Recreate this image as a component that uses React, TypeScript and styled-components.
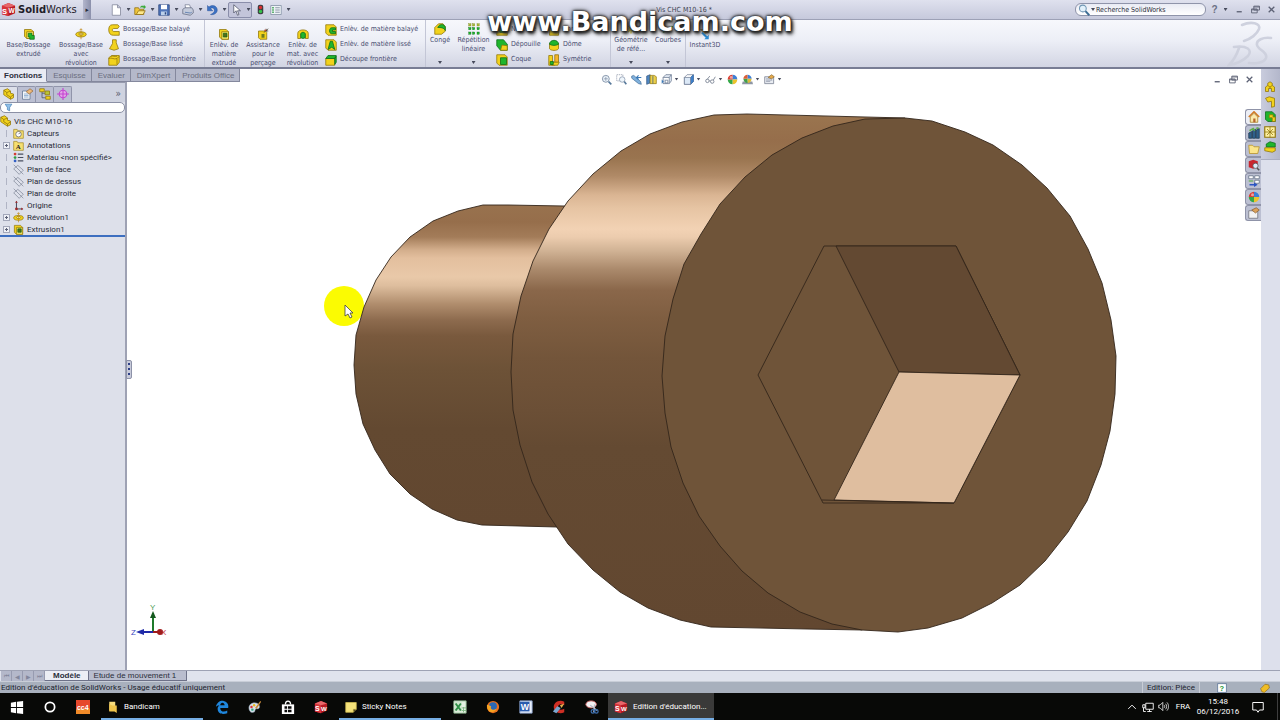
import React from 'react';
import styled, { createGlobalStyle, css } from 'styled-components';

const GlobalStyle = createGlobalStyle`
  * { box-sizing: border-box; }
  html, body { margin: 0; padding: 0; }
  body { font-family: Roboto, "Open Sans", "Noto Sans", sans-serif; font-size: 8px; color: #2b2e3a; background: #ffffff; }
  button, input { font: inherit; color: inherit; }
  ul { list-style: none; margin: 0; padding: 0; }
`;

const uiFont = '"DejaVu Sans Condensed", "DejaVu Sans", sans-serif';
const tabFont = '"Liberation Sans", Arial, sans-serif';

/* ---------- icons ---------- */

const Y = '#f2d21c';
const YD = '#8f7408';
const G = '#1fb52c';
const GD = '#0b6a18';

const icons: Record<string, React.ReactNode> = {
  solidworks: (
    <>
      <path d="M1 4 8 1l7 3v8l-7 3-7-2z" fill="#b81a22" />
      <path d="M1 4 8 6v9l-7-2z" fill="#d8333a" />
      <path d="M1 4 8 1l7 3-7 2z" fill="#e8666a" />
      <text x="1" y="13" fontSize="8" fontWeight="700" fill="#fff" fontFamily="Liberation Sans">S</text>
      <text x="8" y="12" fontSize="7" fontWeight="700" fill="#fff" fontFamily="Liberation Sans">W</text>
    </>
  ),
  newDoc: <path d="M3 1h7l4 4v10H3zM10 1v4h4" fill="#fff" stroke="#7d8296" />,
  open: (
    <>
      <path d="M1 5h5l1 2h6v7H1z" fill="#f0c63a" stroke="#8d6b10" />
      <path d="M3 14 6 9h9l-3 5z" fill="#fde88a" stroke="#8d6b10" />
      <path d="M8 5c1-3 3-3 5-2V1l3 3-3 3V5c-2-1-3-1-5 0z" fill="#3bab3b" />
    </>
  ),
  save: (
    <>
      <path d="M1 1h14v14H1z" fill="#4f74b8" stroke="#29447c" />
      <path d="M4 1h8v6H4z" fill="#fff" />
      <path d="M4 10h8v5H4z" fill="#bcd0ea" />
      <path d="M9 11h2v3H9z" fill="#29447c" />
    </>
  ),
  print: (
    <>
      <path d="M4 1h6l2 5H5z" fill="#fff" stroke="#7a8097" />
      <path d="M1 7l3-2h9l2 3v4l-4 3-10-2z" fill="#c4cbdb" stroke="#666c82" />
      <path d="M4 11l7 1 2-1" fill="none" stroke="#4d70a8" />
    </>
  ),
  undo: <path d="M2 2v7h7L6 6c3-2 6 0 5 4-1 2-3 3-5 4 5 1 9-2 9-6 0-5-6-8-11-4z" fill="#3c72c4" stroke="#1f4a92" strokeWidth=".6" />,
  cursor: <path d="M5 1v11l3-3 2 6 2-1-2-5h4z" fill="#fff" stroke="#4c5064" />,
  traffic: (
    <>
      <rect x="4" y="1" width="8" height="14" rx="3" fill="#3c3c40" />
      <circle cx="8" cy="5" r="2.5" fill="#d93030" />
      <circle cx="8" cy="11" r="2.5" fill="#35c24a" />
    </>
  ),
  options: (
    <>
      <path d="M1 2h14v12H1z" fill="#eef3f6" stroke="#7f8ca0" />
      <path d="M3 5h2M3 8h2M3 11h2" stroke="#35a04a" strokeWidth="2" />
      <path d="M7 5h6M7 8h6M7 11h6" stroke="#6d7a90" />
    </>
  ),
  search: (
    <>
      <circle cx="6.5" cy="6" r="4.5" fill="#e2f1fb" stroke="#7097b4" strokeWidth="1.4" />
      <path d="M10 9.500l5 5.500" stroke="#3d6d94" strokeWidth="2.600" />
    </>
  ),
  extrude: (
    <>
      <path d="M2 2h9l3 3v9H5l-3-3z" fill={Y} stroke={YD} />
      <path d="M5 5h9v9H5z" fill="#fbe96c" stroke={YD} />
      <path d="M7 7h5v3h3v5H9v-3H7z" fill={G} stroke={GD} />
    </>
  ),
  revolve: (
    <>
      <ellipse cx="8" cy="8.500" rx="7" ry="3.500" fill={Y} stroke={YD} />
      <ellipse cx="8" cy="8" rx="3" ry="1.500" fill="#fff6b0" stroke={YD} />
      <path d="M8 1v14M6 3l2-2 2 2" stroke="#c08a1a" fill="none" />
    </>
  ),
  sweep: <path d="M13 1H6C2 1 1 4 1 8s2 7 6 7h8v-5H8c-3 0-3-4 0-4h5l2-3z" fill={Y} stroke={YD} />,
  loft: <path d="M6 1h5v4l3 8-6 2-6-2 4-7z" fill={Y} stroke={YD} />,
  boundary: (
    <>
      <path d="M1 5l4-3h10v9l-3 4H1z" fill={Y} stroke={YD} />
      <path d="M1 6c4-2 7 2 11 0l3-3M12 6v8M4 3c3-1 5 1 8 0" fill="none" stroke={YD} />
    </>
  ),
  cutExtrude: (
    <>
      <path d="M2 2h9l3 3v10H5l-3-3z" fill={Y} stroke={YD} />
      <path d="M5 5h9v10H5z" fill="#fbe96c" stroke={YD} />
      <path d="M7 7h5v5H7z" fill="#5a6a18" stroke={GD} />
    </>
  ),
  hole: (
    <>
      <path d="M2 4h9l2 2v9H4l-2-2z" fill={Y} stroke={YD} />
      <path d="M6 8h4v5H6z" fill="#6f7b20" />
      <path d="M9 6l6-5M12 1l1 4M10 3l5 1" stroke="#4a4030" />
      <circle cx="11" cy="3" r="1" fill="#d83a2a" />
    </>
  ),
  cutRevolve: (
    <>
      <path d="M1 7c0-6 14-6 14 0v7h-4V8H5v6H1z" fill={Y} stroke={YD} />
      <path d="M5 8c0-3 6-3 6 0v5l-3 1-3-1z" fill={G} stroke={GD} />
    </>
  ),
  cutSweep: (
    <>
      <path d="M1 1h11l3 3v11H4l-3-3z" fill={Y} stroke={YD} />
      <path d="M14 5H9C5 5 5 13 9 13h5v-3h-4V8h4z" fill={G} stroke={GD} />
    </>
  ),
  cutLoft: (
    <>
      <path d="M1 1h11l3 3v11H4l-3-3z" fill={Y} stroke={YD} />
      <path d="M7 3h3l3 11-4-3-5 3z" fill={G} stroke={GD} />
    </>
  ),
  cutBoundary: (
    <>
      <path d="M1 6h12v9H1z" fill={Y} stroke={YD} />
      <path d="M1 6l3-4h11l-2 4zM13 6l2-3v8l-2 3z" fill={G} stroke={GD} />
    </>
  ),
  fillet: (
    <>
      <path d="M1 6l5-5h6l3 4v6l-5 4H1z" fill={Y} stroke={YD} />
      <path d="M5 6C7 1 13 1 15 5v5c-2-4-6-4-10-4z" fill={G} stroke={GD} />
    </>
  ),
  pattern: (
    <g>
      {[1, 6, 12].map((x) => [1, 6, 12].map((y) => (
        <rect key={`${x}-${y}`} x={x} y={y} width="3" height="3" fill={y === 1 ? '#a8b83a' : G} stroke={y === 1 ? '#7d8a1c' : GD} strokeWidth=".5" />
      )))}
    </g>
  ),
  rib: (
    <>
      <path d="M1 3h4v8h10v4H1z" fill={Y} stroke={YD} />
      <path d="M5 4l8 7H5z" fill={G} stroke={GD} />
    </>
  ),
  draft: (
    <>
      <path d="M1 1h9l5 6v8H6L1 9z" fill={G} stroke={GD} />
      <path d="M8 8l7 1v6H6z" fill={Y} stroke={YD} />
    </>
  ),
  shell: (
    <>
      <path d="M1 1h11l3 3v11H4l-3-3z" fill={Y} stroke={YD} />
      <path d="M6 5h8v9H6z" fill={G} stroke={GD} />
    </>
  ),
  wrap: (
    <>
      <path d="M2 4h12v11H2z" fill={Y} stroke={YD} />
      <path d="M2 5c2-5 10-5 12 0l-6 3z" fill={G} stroke={GD} />
    </>
  ),
  dome: (
    <>
      <path d="M2 6v7c2 3 10 3 12 0V6z" fill={Y} stroke={YD} />
      <path d="M2 7C2 0 14 0 14 7c-3 2-9 2-12 0z" fill={G} stroke={GD} />
    </>
  ),
  mirror: (
    <>
      <path d="M1 2h5v9h3v4H1z" fill={Y} stroke={YD} />
      <path d="M9 1h5v10H9z" fill="#f7b42a" stroke={YD} />
      <path d="M6 11h9l-2 4H5z" fill={Y} stroke={YD} />
      <path d="M3 10h4v4H3z" fill={G} stroke={GD} />
    </>
  ),
  refGeo: <path d="M4 4l8 8M12 4l-8 8M8 2v12M2 8h12" stroke="#d6c21a" strokeWidth="1.500" />,
  curves: <path d="M2 13C4 3 9 14 14 4" stroke="#2f9a35" strokeWidth="2" fill="none" />,
  instant: (
    <>
      <path d="M2 2h7l5 3-6 2z" fill="#f5b32e" stroke="#8f7408" />
      <path d="M5 5l6 6 2-2v6H7l2-2-6-6z" fill="#2b8fd6" />
    </>
  ),
  zoomFit: (
    <>
      <circle cx="7" cy="7" r="5" fill="#eef5fb" stroke="#7d8ea4" strokeWidth="1.300" />
      <path d="M4 7h6M7 4v6" stroke="#7d8ea4" />
      <path d="M11 11l4 4" stroke="#56789a" strokeWidth="2.400" />
    </>
  ),
  zoomArea: (
    <>
      <path d="M1 1h9v9H1z" fill="none" stroke="#8a93a6" strokeDasharray="2 1" />
      <circle cx="9" cy="8" r="4" fill="#eef5fb" stroke="#7d8ea4" />
      <path d="M12 11l3 4" stroke="#56789a" strokeWidth="2.400" />
    </>
  ),
  prevView: (
    <>
      <path d="M1 3l3-1 10 9 1 4-4-1L1 6z" fill="#7fb0dc" stroke="#4a7299" />
      <path d="M9 5h6M11 2L8 5l3 3" stroke="#3a79b6" strokeWidth="1.600" fill="none" />
    </>
  ),
  section: (
    <>
      <path d="M1 3l5-2v12l-5 2z" fill="#4f86c4" stroke="#33547d" />
      <path d="M6 2h6l3 2v10H6z" fill="#ecd04b" stroke={YD} />
      <path d="M10 3v11" stroke="#33547d" />
    </>
  ),
  viewOri: (
    <>
      <path d="M3 5l4-4h8v9l-3 4H3z" fill="#e5ecf5" stroke="#5b6a85" />
      <path d="M3 5h9v9M12 5l3-4M6 9h4v4H6z" fill="#fff" stroke="#5b6a85" />
      <path d="M1 8l3 3-3 3z" fill="#3a79b6" />
    </>
  ),
  display: (
    <>
      <path d="M2 5l4-4h9v10l-4 4H2z" fill="#fff" stroke="#66738c" />
      <path d="M11 5l4-4v10l-4 4z" fill="#3f83cf" stroke="#2d5e99" />
      <path d="M2 5h9v10H2z" fill="#dce9f7" stroke="#66738c" />
    </>
  ),
  glasses: <path d="M1 10a2.500 2.500 0 1 0 5 0 2.500 2.500 0 1 0-5 0M8 11a2.500 2.500 0 1 0 5 0 2.500 2.500 0 1 0-5 0M6 10h2M3 8l4-5M12 9l3-5" fill="none" stroke="#7c8494" strokeWidth="1.300" />,
  appearance: (
    <>
      <path d="M8 8V1a7 7 0 0 1 7 7z" fill="#3d7fd6" />
      <path d="M8 8h7a7 7 0 0 1-7 7z" fill="#ecc32c" />
      <path d="M8 8v7a7 7 0 0 1-7-7z" fill="#35a848" />
      <path d="M8 8H1a7 7 0 0 1 7-7z" fill="#dc3f35" />
      <circle cx="6" cy="5" r="2" fill="#ffffff" opacity=".5" />
    </>
  ),
  scene: (
    <>
      <path d="M1 11h14l1 4H0z" fill="#8f97a5" />
      <path d="M8 7V1a6 6 0 0 1 6 6z" fill="#3d7fd6" />
      <path d="M8 7h6a6 6 0 0 1-6 6z" fill="#dcb93a" />
      <path d="M8 7v6a6 6 0 0 1-6-6z" fill="#43a04b" />
      <path d="M8 7H2a6 6 0 0 1 6-6z" fill="#dc5f35" />
    </>
  ),
  viewSettings: (
    <>
      <path d="M1 4h13v10H1z" fill="#e9ecf2" stroke="#6a7184" />
      <path d="M3 7h9M3 9h9M3 11h6" stroke="#8b93a5" />
      <path d="M6 5l5-4 4 3-4 3z" fill="#e5a94a" stroke="#8a6a35" />
    </>
  ),
  part: (
    <>
      <path d="M1 3l5-2 4 3v3l4 1v5l-4 2-9-6z" fill={Y} stroke={YD} />
      <path d="M1 3l4 3v3l5 3v3M5 6l5-2M10 12l4-3" fill="none" stroke={YD} />
    </>
  ),
  property: (
    <>
      <path d="M2 4h10v11H2z" fill="#f4f7fb" stroke="#5d7390" />
      <path d="M4 8h6M4 10h6M4 12h6" stroke="#7ca0c8" />
      <path d="M7 5l5-4 4 3-5 4z" fill="#eeb97a" stroke="#9a7040" />
    </>
  ),
  config: (
    <>
      <path d="M4 4v9h5M4 7h5" stroke="#4a5064" fill="none" />
      <path d="M1 1h6v4H1z" fill={Y} stroke={YD} />
      <path d="M8 4h6v5H8z" fill="#b8c534" stroke={YD} />
      <path d="M9 11h6v4H9z" fill={Y} stroke={YD} />
    </>
  ),
  target: (
    <>
      <circle cx="8" cy="8" r="5" fill="#e3a6e8" stroke="#c545d1" strokeWidth="1.500" />
      <path d="M8 0v16M0 8h16" stroke="#c545d1" strokeWidth="1.500" />
    </>
  ),
  funnel: <path d="M2 2h12l-4 6v6l-4-2V8z" fill="#8fc0ea" stroke="#2c6ba6" />,
  sensors: (
    <>
      <path d="M1 2h5l1 2h8v11H1z" fill="#f6df70" stroke="#a08421" />
      <circle cx="8" cy="9" r="4" fill="#fff" stroke="#555" />
      <path d="M8 9l2-2" stroke="#333" />
    </>
  ),
  annotations: (
    <>
      <path d="M1 2h5l1 2h8v11H1z" fill="#f6df70" stroke="#a08421" />
      <text x="4" y="13" fontSize="10" fontWeight="700" fill="#222" fontFamily="Liberation Serif">A</text>
    </>
  ),
  material: (
    <>
      <circle cx="3" cy="3" r="2" fill="#d43c34" />
      <circle cx="3" cy="8" r="2" fill="#2f9e43" />
      <circle cx="3" cy="13" r="2" fill="#3460c4" />
      <path d="M7 3h8M7 8h8M7 13h8" stroke="#4a4f60" strokeWidth="1.800" />
    </>
  ),
  plane: <path d="M1 7l6-5 8 7-6 6zM1 1l14 14" fill="none" stroke="#848a9c" strokeWidth="1.100" />,
  origin: (
    <>
      <path d="M5 2v11h9" fill="none" stroke="#3d4254" strokeWidth="1.400" />
      <path d="M3 4l2-3 2 3zM12 11l3 2-3 2z" fill="#a02828" />
      <circle cx="5" cy="13" r="2" fill="#a02828" />
    </>
  ),
  home: (
    <>
      <path d="M3 8v7h10V8L8 3z" fill="#fbe9ac" stroke="#a07a1c" />
      <path d="M1 8l7-7 7 7" fill="none" stroke="#d07a26" strokeWidth="2" />
      <path d="M7 10h3v5H7z" fill="#b5652b" />
    </>
  ),
  library: (
    <>
      <path d="M1 8l4-2v9H1zM6 5l4-2v12H6zM11 4l4-2v13h-4z" fill="#2e5f8a" stroke="#1c3850" />
      <path d="M2 5l5-3 2 3M11 2l3-1" stroke="#5fb04b" strokeWidth="2" fill="none" />
    </>
  ),
  folder: <path d="M1 3h5l2 2h7l-2 9H2z" fill="#fbe58b" stroke="#b58f22" />,
  swSearch: (
    <>
      <path d="M1 3l6-2 6 2v8l-6 2-6-2z" fill="#c8262e" />
      <circle cx="10" cy="9" r="3.500" fill="#dbeaf7" stroke="#555" />
      <path d="M12 12l3 3" stroke="#555" strokeWidth="2" />
    </>
  ),
  viewPalette: (
    <>
      <path d="M1 1h6v4H1zM9 1h6v4H9zM9 7h6v4H9z" fill="#fff" stroke="#5d6b80" />
      <path d="M1 7h6v2H1z" fill="#77b36a" />
      <path d="M2 12h6v-2l5 3-5 3v-2H2z" fill="#2b55c4" />
    </>
  ),
  custom: (
    <>
      <path d="M1 5h12v10H1z" fill="#f2f2f2" stroke="#6d6d78" />
      <path d="M5 4l6-3 4 3-5 4z" fill="#dca15a" stroke="#8a6133" />
    </>
  ),
  railPart: (
    <>
      <path d="M2 14V8l3-2V3l3-2 3 2v3l3 2v6h-4v-4H6v4z" fill={Y} stroke={YD} />
      <path d="M5 6l3 2 3-2M8 8v2" fill="none" stroke={YD} />
    </>
  ),
  railBend: <path d="M2 3l5-2 7 2v11l-4 1V7L5 8z" fill={Y} stroke={YD} />,
  railSheet: (
    <>
      <path d="M2 1h9l4 4v9H5l-3-3z" fill={G} stroke={GD} />
      <path d="M7 5h5v3h3v6h-4v-5H7z" fill={Y} stroke={YD} />
    </>
  ),
  railGrid: (
    <>
      <path d="M1 1h14v14H1z" fill="#fdf0a0" stroke={YD} strokeWidth="1.500" />
      <path d="M1 8h14M8 1v14M4 4l8 8M12 4l-8 8" stroke={YD} />
    </>
  ),
  railMold: (
    <>
      <path d="M3 4l5-3 7 2v5H3z" fill={G} stroke={GD} />
      <path d="M1 9h14v4l-4 2-10-2z" fill={Y} stroke={YD} />
    </>
  ),
  windows: <path d="M1 3l6-1v6H1zM8 2l7-1v7H8zM1 9h6v6l-6-1zM8 9h7v7l-7-1z" fill="#fff" />,
  cortana: <circle cx="8" cy="8" r="5.300" fill="none" stroke="#fff" strokeWidth="2" />,
  cc: (
    <>
      <rect width="16" height="16" fill="#e6482c" />
      <path d="M0 10h16v6H0z" fill="#f08a28" />
      <text x="1" y="11" fontSize="8" fontWeight="700" fill="#fff" fontFamily="Liberation Sans">cc4</text>
    </>
  ),
  explorer: (
    <>
      <path d="M3 1h8v12H3z" fill="#f7dc7c" />
      <path d="M7 6h6v10l-3-2H3V4z" fill="#efc44b" />
    </>
  ),
  edge: <path d="M1 8C2 2 7 0 10 1c4 1 6 4 5 8H6c0 5 5 5 8 3v3c-5 2-11 1-11-5 0-2 1-3 2-4-2 0-3 1-4 2zM6 6h5c0-4-5-4-5 0z" fill="#1f86dc" />,
  paint: (
    <>
      <path d="M1 9c0-5 6-7 10-5 4 3 2 7-1 6-3 0-1 4-4 4-3 1-5-2-5-5z" fill="#d9e2ea" stroke="#7f93a5" strokeWidth=".6" />
      <circle cx="4" cy="8" r="1.400" fill="#d33" />
      <circle cx="7" cy="6" r="1.400" fill="#e7b91e" />
      <circle cx="5" cy="11" r="1.400" fill="#3a8" />
      <path d="M8 9l6-8 1 1-5 8z" fill="#c98a3a" />
    </>
  ),
  store: (
    <>
      <path d="M1 5h14v11H1z" fill="#fff" />
      <path d="M5 5c0-5 6-5 6 0" fill="none" stroke="#fff" strokeWidth="1.400" />
      <path d="M4 7h3v3H4zM8 7h4v3H8zM4 11h3v3H4zM8 11h4v3H8z" fill="#0a0a0a" />
    </>
  ),
  sticky: <path d="M1 2h14v9l-4 4H1zM15 11h-4v4" fill="#f4e27a" stroke="#d2bd52" />,
  excel: (
    <>
      <path d="M1 1h14v14H1z" fill="#e3f0e2" stroke="#8ab58c" />
      <path d="M1 2h9v11H1z" fill="#cfe6cd" />
      <path d="M3 4l6 8M9 4l-6 8" stroke="#2f9147" strokeWidth="2.200" />
      <path d="M10 9h5M10 12h5M12 8v6" stroke="#7bb57f" />
    </>
  ),
  firefox: (
    <>
      <circle cx="8" cy="8" r="7" fill="#e8701c" />
      <circle cx="8" cy="7" r="4.500" fill="#2a68b4" />
      <path d="M1 6c2-1 3 1 5 1-2 4 3 5 6 3-2 6-11 5-11-4z" fill="#f6a421" />
    </>
  ),
  word: (
    <>
      <path d="M1 1h14v14H1z" fill="#e9f0fb" stroke="#8ba4cf" />
      <path d="M1 2h11v11H1z" fill="#2a5cae" />
      <text x="2" y="11" fontSize="10" fontWeight="700" fill="#fff" fontFamily="Liberation Sans">W</text>
    </>
  ),
  ccleaner: (
    <>
      <path d="M14 2C8-1 2 3 2 8s6 9 12 6v-4c-4 2-7 1-7-2s3-4 7-2z" fill="#cf2f24" />
      <path d="M6 7l4 2-5 6-4-2z" fill="#7aa6cf" />
      <path d="M9 6l5-2-3 5z" fill="#e3b04b" />
    </>
  ),
  snip: (
    <>
      <ellipse cx="7" cy="5" rx="6" ry="4" fill="#f2f2f4" stroke="#d76a6a" />
      <path d="M6 6l8 6M10 14l1-9" stroke="#b7bcc8" strokeWidth="1.500" />
      <circle cx="13" cy="13" r="2" fill="none" stroke="#3d6fae" strokeWidth="1.400" />
      <circle cx="9" cy="13" r="2" fill="none" stroke="#3d6fae" strokeWidth="1.400" />
    </>
  ),
  chevronUp: <path d="M2 11l6-6 6 6" fill="none" stroke="#fff" strokeWidth="1.500" />,
  network: <path d="M5 3h10v8H5zM10 11v3M7 14h6M1 5h3v4H1zM2 9v5h3" fill="none" stroke="#fff" strokeWidth="1.200" />,
  sound: <path d="M1 6h2l4-4v12l-4-4H1zM9 6c1 1 1 3 0 4M11 4c2 2 2 6 0 8M13 2c3 3 3 9 0 12" fill="none" stroke="#fff" strokeWidth="1.100" />,
  notify: <path d="M1 2h14v10h-5l-2 3-2-3H1z" fill="none" stroke="#fff" strokeWidth="1.300" />,
  help: (
    <>
      <path d="M1 1h14v14H1z" fill="#fff" stroke="#3d5c85" />
      <text x="4" y="13" fontSize="12" fontWeight="700" fill="#1c9436" fontFamily="Liberation Sans">?</text>
    </>
  ),
  tag: <path d="M1 9l7-7 6 1 1 5-8 7-4-1z" fill="#f0bd26" stroke="#8f6a10" />,
  minimize: <path d="M3 12h9" stroke="#5d6275" strokeWidth="2.400" />,
  restore: <path d="M5 2h10v7H5zM5 3.500h10M1 7h10v7H1zM1 8.500h10" fill="none" stroke="#5d6275" strokeWidth="1.600" />,
  close: <path d="M3 3l10 10M13 3L3 13" stroke="#5d6275" strokeWidth="2.200" />,
};

const Svg = styled.svg<{ $size: number }>`
  display: block;
  flex: none;
  width: ${(p) => p.$size}px;
  height: ${(p) => p.$size}px;
`;

const Icon = ({ name, size = 12 }: { name: string; size?: number }) => (
  <Svg $size={size} viewBox="0 0 16 16" aria-hidden="true">{icons[name]}</Svg>
);

const Caret = styled.span`
  flex: none;
  width: 4px;
  height: 3px;
  background: #474b5c;
  clip-path: polygon(0 0, 100% 0, 50% 100%);
`;

const resetButton = css`
  display: flex;
  align-items: center;
  justify-content: center;
  margin: 0;
  padding: 0;
  border: 0;
  background: none;
  cursor: default;
`;

/* ---------- page frame ---------- */

const Page = styled.div`
  display: flex;
  flex-direction: column;
  min-height: 100vh;
  position: relative;
`;

/* ---------- title bar ---------- */

const TitleBar = styled.header`
  display: grid;
  grid-template-columns: 1fr auto 1fr;
  align-items: center;
  height: 20px;
  background: linear-gradient(#dfe1ee, #c6c9dc);
  border-bottom: 1px solid #9da1b6;
  font-family: ${uiFont};
  font-size: 7px;
`;

const TitleLeft = styled.div`
  display: flex;
  align-items: center;
  height: 19px;
`;

const Brand = styled.div`
  display: flex;
  align-items: center;
  gap: 2px;
  width: 83px;
  padding-left: 1px;
  font: 10px "DejaVu Sans", sans-serif;
  color: #1f2029;
`;

const BrandArrow = styled.button`
  ${resetButton}
  width: 8px;
  height: 19px;
  background: linear-gradient(90deg, #b3b6cc, #8b90ab);
  color: #2b2e3a;
`;

const QuickTools = styled.div`
  display: flex;
  align-items: center;
  margin-left: 17px;
`;

const QuickButton = styled.button<{ $pressed?: boolean; $plain?: boolean }>`
  ${resetButton}
  gap: 5px;
  width: ${(p) => (p.$plain ? 16 : 24)}px;
  height: 16px;
  ${(p) => p.$pressed && css`
    background: #c3c5da;
    border: 1px solid #8a8eaa;
    border-radius: 2px;
  `}
`;

const DocTitle = styled.h1`
  margin: 0;
  padding-left: 88px;
  font-size: 7px;
  font-weight: 400;
  color: #3b3f50;
`;

const TitleRight = styled.div`
  display: flex;
  align-items: center;
  justify-content: flex-end;
  gap: 4px;
  padding-right: 3px;
`;

const SearchBox = styled.label`
  display: flex;
  align-items: center;
  gap: 1px;
  width: 131px;
  height: 13px;
  padding: 0 2px;
  margin-right: 1px;
  background: linear-gradient(#e9ebf4, #ffffff);
  border: 1px solid #8f94aa;
  border-radius: 6px;
`;

const PlainInput = styled.input`
  flex: 1;
  min-width: 0;
  padding: 0;
  border: 0;
  outline: 0;
  background: transparent;
  &::placeholder { color: #2b2e3a; opacity: 1; }
`;

const WindowButton = styled.button<{ $narrow?: boolean }>`
  ${resetButton}
  width: ${(p) => (p.$narrow ? 7 : 12)}px;
  height: 12px;
  font: 700 10px ${tabFont};
  color: #6b7084;
`;

/* ---------- ribbon ---------- */

const Ribbon = styled.nav`
  display: flex;
  height: 49px;
  background: linear-gradient(#f7f8fc, #eceef6 45%, #d2d5e3);
  border-bottom: 2px solid #787d94;
  font-family: ${uiFont};
  font-size: 7px;
  line-height: 9px;
  color: #484c70;
`;

const RibbonGroup = styled.div<{ $last?: boolean }>`
  display: flex;
  border-right: ${(p) => (p.$last ? 0 : 1)}px solid #c3c6d6;
`;

const BigButton = styled.button<{ $width: number; $menu?: boolean }>`
  ${resetButton}
  flex-direction: column;
  justify-content: flex-start;
  gap: 1px;
  width: ${(p) => p.$width}px;
  padding-top: ${(p) => (p.$menu ? 3 : 8)}px;
  white-space: nowrap;
`;

const BigLabel = styled.span<{ $menu?: boolean }>`
  height: ${(p) => (p.$menu ? 24 : 27)}px;
  white-space: pre;
`;

const SmallColumn = styled.div<{ $width: number }>`
  display: flex;
  flex-direction: column;
  justify-content: center;
  gap: 3px;
  width: ${(p) => p.$width}px;
  padding: 2px 0 0 3px;
`;

const SmallButton = styled.button`
  ${resetButton}
  justify-content: flex-start;
  gap: 3px;
  height: 12px;
  white-space: nowrap;
`;

const RibbonLogo = styled.svg`
  width: 46px;
  height: 47px;
  margin-left: auto;
  margin-right: 7px;
`;

/* ---------- workspace ---------- */

const Workspace = styled.main`
  display: flex;
  flex: 1;
`;

const SidePanel = styled.aside`
  display: flex;
  flex-direction: column;
  width: 127px;
  background: #dde0ea;
  border-right: 2px solid #9ea2b4;
  position: relative;
`;

const CommandTabs = styled.div`
  display: flex;
  width: max-content;
  height: 13px;
  z-index: 1;
  font-family: ${tabFont};
  color: #6b6f80;
`;

const CommandTab = styled.button<{ $active?: boolean }>`
  ${resetButton}
  padding: 0 5px 0 6px;
  border: 1px solid #84889d;
  border-left: 0;
  border-top: 0;
  background: ${(p) => (p.$active ? '#e9ebf3' : '#b4b8ca')};
  ${(p) => p.$active && 'font-weight: 700; color: #2b2e3a; border-bottom-color: #e9ebf3; padding: 0 4px;'}
`;

const PanelTabs = styled.div`
  display: flex;
  align-items: center;
  height: 20px;
  padding-top: 2px;
  background: #cfd3e0;
  border-top: 1px solid #9599ac;
`;

const PanelTab = styled.button<{ $active?: boolean }>`
  ${resetButton}
  width: 18px;
  height: 16px;
  border-right: 1px solid #9094aa;
  border-top: 1px solid #9094aa;
  border-radius: 0 2px 0 0;
  background: ${(p) => (p.$active ? '#dde0ea' : '#bbbfd2')};
`;

const PanelMore = styled.button`
  ${resetButton}
  margin-left: auto;
  padding-right: 4px;
  font: 10px ${uiFont};
  color: #555a6e;
`;

const FilterBox = styled.label`
  display: flex;
  align-items: center;
  gap: 2px;
  height: 11px;
  margin-bottom: 2px;
  padding: 0 3px;
  background: #fff;
  border: 1px solid #8b90a5;
  border-radius: 5px;
`;

const Tree = styled.ul`
  display: flex;
  flex-direction: column;
  border-bottom: 2px solid #3d6fc0;
`;

const TreeRow = styled.li<{ $root?: boolean }>`
  display: flex;
  align-items: center;
  gap: ${(p) => (p.$root ? 2 : 3)}px;
  height: 12px;
  padding-left: ${(p) => (p.$root ? 0 : 3)}px;
  white-space: nowrap;
  color: #2a2c38;
`;

const Toggle = styled.span<{ $show?: boolean }>`
  flex: none;
  width: 7px;
  height: 7px;
  border: 1px solid ${(p) => (p.$show ? '#a3a8ba' : 'transparent')};
  background: ${(p) => (p.$show ? 'linear-gradient(#5b6075, #5b6075) center / 3px 1px no-repeat, linear-gradient(#5b6075, #5b6075) center / 1px 3px no-repeat, #eef0f6' : 'linear-gradient(#b0b4c4, #b0b4c4) center / 1px 12px no-repeat')};
`;

const SplitHandle = styled.button`
  ${resetButton}
  flex-direction: column;
  gap: 3px;
  position: absolute;
  right: -7px;
  top: 50%;
  width: 6px;
  height: 19px;
  z-index: 2;
  margin-top: -10px;
  background: #c7cada;
  border: 1px solid #8d92a8;
  border-radius: 0 2px 2px 0;
`;

const SplitDot = styled.span`
  width: 2px;
  height: 2px;
  background: #2c3e86;
`;

const Viewport = styled.section`
  display: flex;
  flex-direction: column;
  flex: 1;
  min-width: 0;
  position: relative;
  background: #ffffff;
`;

const ViewHeader = styled.div`
  display: grid;
  grid-template-columns: 1fr auto 1fr;
  align-items: center;
  height: 20px;
  padding-right: 6px;
`;

const ViewTools = styled.div`
  grid-column: 2;
  display: flex;
  align-items: center;
  gap: 4px;
`;

const ViewButton = styled.button`
  ${resetButton}
  gap: 3px;
`;

const DocControls = styled.div`
  display: flex;
  justify-content: flex-end;
  gap: 4px;
`;

const Canvas = styled.svg`
  display: block;
  flex: 1;
  width: 100%;
  min-height: 0;
`;

const TaskTabs = styled.div`
  position: absolute;
  top: 40px;
  right: 0;
  display: flex;
  flex-direction: column;
`;

const TaskTab = styled.button<{ $active?: boolean }>`
  ${resetButton}
  width: 16px;
  height: 16px;
  border: 1px solid #8f93a8;
  border-right: 0;
  border-radius: 3px 0 0 3px;
  background: ${(p) => (p.$active ? '#eceef5' : '#bcc0d2')};
`;

const Rail = styled.aside`
  width: 19px;
  background: #dde0ec;
`;

const RailTools = styled.div`
  display: flex;
  flex-direction: column;
  align-items: center;
  gap: 3px;
  height: 91px;
  padding: 12px 1px 0 0;
  border-bottom: 1px solid #a9adc0;
  background: linear-gradient(90deg, #c9ccdd, #b3b7cb);
`;

const RailButton = styled.button`
  ${resetButton}
`;

/* ---------- bottom ---------- */

const SheetBar = styled.div`
  display: flex;
  height: 11px;
  padding-left: 1px;
  background: #e0e3ed;
  border-top: 1px solid #9ea2b4;
  font-family: ${tabFont};
  font-size: 8px;
`;

const SheetNav = styled.button`
  ${resetButton}
  width: 11px;
  background: #b4b8ca;
  border-right: 1px solid #979bb0;
  font-size: 6px;
  color: #82869c;
`;

const SheetTab = styled.button<{ $active?: boolean }>`
  ${resetButton}
  padding: 0 ${(p) => (p.$active ? 7 : 10)}px 0 ${(p) => (p.$active ? 8 : 5)}px;
  border: 1px solid #6d7188;
  border-width: 0 1px 1px 0;
  background: ${(p) => (p.$active ? '#eceef5' : '#b9bdce')};
  font-weight: ${(p) => (p.$active ? 700 : 400)};
`;

const StatusBar = styled.footer`
  display: flex;
  align-items: center;
  height: 12px;
  padding: 0 10px 0 1px;
  background: #a8b0bd;
  border-top: 1px solid #c9ced8;
  color: #20232e;
`;

const StatusCell = styled.span`
  display: flex;
  align-items: center;
  justify-content: center;
  height: 11px;
  padding: 0 4px;
  border-left: 1px solid #c8cdd6;
  border-right: 1px solid #c8cdd6;
`;

const StatusRight = styled.div`
  display: flex;
  align-items: center;
  margin-left: auto;
`;

const StatusIcons = styled.div`
  display: flex;
  gap: 33px;
  margin-left: 17px;
`;

const Taskbar = styled.nav`
  display: flex;
  align-items: stretch;
  height: 27px;
  background: #080907;
  color: #ffffff;
`;

const AppButton = styled.button`
  ${resetButton}
  width: 33px;
`;

const AppWindow = styled.button<{ $active?: boolean }>`
  ${resetButton}
  justify-content: flex-start;
  gap: 5px;
  width: ${(p) => (p.$active ? 106 : 102)}px;
  margin: 0 ${(p) => (p.$active ? 0 : 2)}px;
  padding: 2px 0 0 6px;
  border-bottom: 2px solid #76aee4;
  background: ${(p) => (p.$active ? '#3a3a39' : 'transparent')};
  color: #fff;
  white-space: nowrap;
`;

const Tray = styled.div`
  display: flex;
  align-items: center;
  margin-left: auto;
  gap: 3px;
  padding-right: 13px;
  border-right: 1px solid #3e3e3e;
  margin-right: 2px;
`;

const TrayButton = styled.button`
  ${resetButton}
  width: 13px;
  height: 24px;
  color: #fff;
`;

const Language = styled(TrayButton)`
  width: 20px;
`;

const Clock = styled.time`
  width: 44px;
  text-align: center;
  line-height: 10px;
`;

const Notify = styled(TrayButton)`
  margin-left: 8px;
`;

const Watermark = styled.div`
  position: absolute;
  top: 6px;
  left: 0;
  right: 0;
  z-index: 5;
  text-align: center;
  pointer-events: none;
  font: 700 27px/32px "DejaVu Sans", sans-serif;
  color: #ffffff;
  text-shadow: 0 0 2px #222, 0 0 3px #222, 1px 2px 3px #222, 0 0 5px #333, 2px 3px 4px #444;
`;

/* ---------- data ---------- */

type Cmd = { icon: string; label: string; width?: number };

const quickTools = ['newDoc', 'open', 'save', 'print', 'undo'];

const baseColumn: Cmd[] = [
  { icon: 'sweep', label: 'Bossage/Base balayé' },
  { icon: 'loft', label: 'Bossage/Base lissé' },
  { icon: 'boundary', label: 'Bossage/Base frontière' },
];
const cutColumn: Cmd[] = [
  { icon: 'cutSweep', label: 'Enlèv. de matière balayé' },
  { icon: 'cutLoft', label: 'Enlèv. de matière lissé' },
  { icon: 'cutBoundary', label: 'Découpe frontière' },
];
const featureColumn: Cmd[] = [
  { icon: 'rib', label: 'Nervure' },
  { icon: 'draft', label: 'Dépouille' },
  { icon: 'shell', label: 'Coque' },
];
const shapeColumn: Cmd[] = [
  { icon: 'wrap', label: 'Enrouler' },
  { icon: 'dome', label: 'Dôme' },
  { icon: 'mirror', label: 'Symétrie' },
];

const treeItems = [
  { icon: 'sensors', label: 'Capteurs' },
  { icon: 'annotations', label: 'Annotations', open: true },
  { icon: 'material', label: 'Matériau <non spécifié>' },
  { icon: 'plane', label: 'Plan de face' },
  { icon: 'plane', label: 'Plan de dessus' },
  { icon: 'plane', label: 'Plan de droite' },
  { icon: 'origin', label: 'Origine' },
  { icon: 'revolve', label: 'Révolution1', open: true },
  { icon: 'cutExtrude', label: 'Extrusion1', open: true },
];

const viewTools = [
  ['zoomFit', false], ['zoomArea', false], ['prevView', false], ['section', false],
  ['viewOri', true], ['display', true], ['glasses', true], ['appearance', false],
  ['scene', true], ['viewSettings', true],
] as const;

const Big = ({ icon, label, width, menu }: { icon: string; label: string; width: number; menu?: boolean }) => (
  <BigButton $width={width} $menu={menu}>
    <Icon name={icon} />
    <BigLabel $menu={menu}>{label}</BigLabel>
    {menu && <Caret />}
  </BigButton>
);

const Small = ({ items, width }: { items: Cmd[]; width: number }) => (
  <SmallColumn $width={width}>
    {items.map((c) => (
      <SmallButton key={c.label}><Icon name={c.icon} />{c.label}</SmallButton>
    ))}
  </SmallColumn>
);

const shank = '564,206 508,205 483,205 458,211 433,221 410,237 391,257 376,280 364,307 356,335 354,365 356,394 363,424 375,450 390,474 410,494 432,509 457,520 482,525 557,527 640,527 640,206';
const headSide = '905,118 747,114 714,115 682,122 650,134 621,151 593,174 568,201 549,229 533,261 521,296 513,334 511,372 513,410 520,445 532,482 548,514 568,544 593,570 620,592 648,608 680,620 711,627 807,629 862,630 905,600';
const face = '905,118 932,121 965,132 993,145 1022,165 1047,188 1070,216 1088,249 1102,283 1111,320 1116,356 1115,394 1110,431 1101,465 1087,501 1068,532 1045,561 1020,585 992,603 962,618 928,628 898,632 862,630 832,624 800,612 768,593 742,571 720,546 699,516 683,483 671,447 665,413 662,376 665,336 673,299 684,264 701,234 720,204 745,177 772,155 802,138 833,126 865,119';

const stops = (list: [number, string][], from: number, to: number) =>
  list.map(([y, c]) => <stop key={y} offset={(y - from) / (to - from)} stopColor={c} />);

const Model = () => (
  <Canvas viewBox="127 89 1134 581" role="img" aria-label="Vis CHC M10-16">
    <defs>
      <linearGradient id="shankShade" gradientUnits="userSpaceOnUse" x1="0" y1="205" x2="0" y2="527">
        {stops([[205, '#98724e'], [222, '#966e4b'], [237, '#a37c59'], [250, '#d3ae8c'], [258, '#e3bf9e'], [277, '#e9c9a9'], [286, '#ddbd9d'], [304, '#b08d6d'], [320, '#8d6b4e'], [336, '#79593d'], [369, '#6d5237'], [429, '#634931'], [527, '#624730']], 205, 527)}
      </linearGradient>
      <linearGradient id="headShade" gradientUnits="userSpaceOnUse" x1="0" y1="114" x2="0" y2="630">
        {stops([[114, '#9a754f'], [140, '#966e4b'], [158, '#99744f'], [176, '#b08a67'], [195, '#dab593'], [208, '#e6c4a3'], [229, '#f2d2b4'], [237, '#ecccae'], [251, '#d0b294'], [269, '#ab8a6c'], [290, '#8a674a'], [318, '#7f5e41'], [358, '#73553a'], [411, '#6b4f36'], [447, '#644a32'], [630, '#624730']], 114, 630)}
      </linearGradient>
    </defs>
    <circle cx="344" cy="306" r="20" fill="#fbfb02" />
    <g stroke="#33261b" strokeWidth=".9" strokeLinejoin="round">
      <polygon points={shank} fill="url(#shankShade)" />
      <polygon points={headSide} fill="url(#headShade)" />
      <polygon points={face} fill="#6f5439" />
      <polygon points="824,246 956,246 1020,375 954,503 823,503 758,375" fill="#6f5439" />
      <polygon points="836,246 956,246 1020,375 899,372" fill="#634932" />
      <polygon points="899,372 1020,375 954,503 834,500" fill="#dfbe9f" />
      <path d="M822 500l132 3" fill="none" />
    </g>
    <path d="M345 305v11l3-2 2 4 2-1-2-4h3z" fill="#fff" stroke="#3f3f3f" strokeWidth=".8" />
    <g fontFamily="Liberation Sans" fontSize="8">
      <path d="M153 632v-16" stroke="#1e7a2a" strokeWidth="2" />
      <path d="M150 618l3-7 3 7z" fill="#14591e" />
      <path d="M153 632h-11" stroke="#1f2aa8" strokeWidth="2" />
      <path d="M144 629l-8 3 8 3z" fill="#1f2aa8" />
      <path d="M153 632h5" stroke="#a01c1c" strokeWidth="2" />
      <circle cx="160" cy="632" r="3" fill="#a01c1c" />
      <text x="150" y="610" fill="#4a9a55">Y</text>
      <text x="131" y="635" fill="#3a48c0">Z</text>
      <text x="161" y="635" fill="#c43a3a">X</text>
    </g>
  </Canvas>
);

const WindowControls = () => (
  <>
    <WindowButton aria-label="Réduire"><Icon name="minimize" size={9} /></WindowButton>
    <WindowButton aria-label="Restaurer"><Icon name="restore" size={9} /></WindowButton>
    <WindowButton aria-label="Fermer"><Icon name="close" size={9} /></WindowButton>
  </>
);

const Apps = ({ names }: { names: string[] }) => (
  <>
    {names.map((n) => <AppButton key={n} aria-label={n}><Icon name={n} size={14} /></AppButton>)}
  </>
);

export default function App() {
  return (
    <Page>
      <GlobalStyle />
      <TitleBar>
        <TitleLeft>
          <Brand><Icon name="solidworks" size={15} /><span><b>Solid</b>Works</span></Brand>
          <BrandArrow aria-label="Menu">▸</BrandArrow>
          <QuickTools>
            {quickTools.map((t) => (
              <QuickButton key={t} aria-label={t}><Icon name={t} size={12} /><Caret /></QuickButton>
            ))}
            <QuickButton $pressed aria-label="Sélectionner"><Icon name="cursor" size={12} /><Caret /></QuickButton>
            <QuickButton $plain aria-label="Reconstruire"><Icon name="traffic" size={11} /></QuickButton>
            <QuickButton aria-label="Options"><Icon name="options" size={12} /><Caret /></QuickButton>
          </QuickTools>
        </TitleLeft>
        <DocTitle>Vis CHC M10-16 *</DocTitle>
        <TitleRight>
          <SearchBox>
            <Icon name="search" size={12} />
            <Caret />
            <PlainInput aria-label="Recherche" placeholder="Recherche SolidWorks" />
          </SearchBox>
          <WindowButton $narrow aria-label="Aide">?</WindowButton>
          <WindowButton $narrow aria-label="Menu aide"><Caret /></WindowButton>
          <WindowControls />
        </TitleRight>
      </TitleBar>

      <Ribbon>
        <RibbonGroup>
          <Big icon="extrude" label={'Base/Bossage\nextrudé'} width={57} />
          <Big icon="revolve" label={'Bossage/Base\navec\nrévolution'} width={48} />
          <Small items={baseColumn} width={99} />
        </RibbonGroup>
        <RibbonGroup>
          <Big icon="cutExtrude" label={'Enlèv. de\nmatière\nextrudé'} width={38} />
          <Big icon="hole" label={'Assistance\npour le\nperçage'} width={40} />
          <Big icon="cutRevolve" label={'Enlèv. de\nmat. avec\nrévolution'} width={39} />
          <Small items={cutColumn} width={103} />
        </RibbonGroup>
        <RibbonGroup>
          <Big icon="fillet" label="Congé" width={28} menu />
          <Big icon="pattern" label={'Répétition\nlinéaire'} width={39} menu />
          <Small items={featureColumn} width={52} />
          <Small items={shapeColumn} width={65} />
        </RibbonGroup>
        <RibbonGroup>
          <Big icon="refGeo" label={'Géométrie\nde réfé...'} width={40} menu />
          <Big icon="curves" label="Courbes" width={34} menu />
        </RibbonGroup>
        <RibbonGroup $last>
          <Big icon="instant" label="Instant3D" width={38} />
        </RibbonGroup>
        <RibbonLogo viewBox="0 0 46 47" aria-hidden="true">
          <g fill="none" stroke="#ced1de" strokeWidth="2.600" strokeLinecap="round">
            <path d="M15 5c9-4 19-2 17 4-2 5-8 10-15 12" />
            <path d="M7 27c13-2 19 3 14 9-5 5-12 8-19 9 5-5 8-11 10-17" />
            <path d="M44 18c-8-1-15 2-14 7s11 7 9 13c-2 5-11 6-17 5" />
          </g>
        </RibbonLogo>
      </Ribbon>

      <Workspace>
        <SidePanel>
          <CommandTabs role="tablist">
            <CommandTab $active role="tab">Fonctions</CommandTab>
            <CommandTab role="tab">Esquisse</CommandTab>
            <CommandTab role="tab">Evaluer</CommandTab>
            <CommandTab role="tab">DimXpert</CommandTab>
            <CommandTab role="tab">Produits Office</CommandTab>
          </CommandTabs>
          <PanelTabs>
            <PanelTab $active aria-label="Arbre"><Icon name="part" /></PanelTab>
            <PanelTab aria-label="Propriétés"><Icon name="property" /></PanelTab>
            <PanelTab aria-label="Configurations"><Icon name="config" /></PanelTab>
            <PanelTab aria-label="DimXpert"><Icon name="target" /></PanelTab>
            <PanelMore>»</PanelMore>
          </PanelTabs>
          <FilterBox><Icon name="funnel" size={9} /><PlainInput aria-label="Filtre" /></FilterBox>
          <Tree>
            <TreeRow $root><Icon name="part" />Vis CHC M10-16</TreeRow>
            {treeItems.map((t) => (
              <TreeRow key={t.label}><Toggle $show={t.open} /><Icon name={t.icon} size={11} />{t.label}</TreeRow>
            ))}
          </Tree>
          <SplitHandle aria-label="Replier le panneau"><SplitDot /><SplitDot /><SplitDot /></SplitHandle>
        </SidePanel>

        <Viewport>
          <ViewHeader>
            <ViewTools>
              {viewTools.map(([name, menu]) => (
                <ViewButton key={name} aria-label={name}><Icon name={name} size={11} />{menu && <Caret />}</ViewButton>
              ))}
            </ViewTools>
            <DocControls><WindowControls /></DocControls>
          </ViewHeader>
          <Model />
          <TaskTabs>
            {['home', 'library', 'folder', 'swSearch', 'viewPalette', 'appearance', 'custom'].map((n, i) => (
              <TaskTab key={n} $active={i === 0} aria-label={n}><Icon name={n} /></TaskTab>
            ))}
          </TaskTabs>
        </Viewport>

        <Rail>
          <RailTools>
            {['railPart', 'railBend', 'railSheet', 'railGrid', 'railMold'].map((n) => (
              <RailButton key={n} aria-label={n}><Icon name={n} /></RailButton>
            ))}
          </RailTools>
        </Rail>
      </Workspace>

      <SheetBar>
        {['⏮', '◀', '▶', '⏭'].map((g, i) => <SheetNav key={i}>{g}</SheetNav>)}
        <SheetTab $active>Modèle</SheetTab>
        <SheetTab>Etude de mouvement 1</SheetTab>
      </SheetBar>
      <StatusBar>
        <span>Edition d'éducation de SolidWorks - Usage éducatif uniquement</span>
        <StatusRight>
          <StatusCell>Edition: Pièce</StatusCell>
          <StatusIcons><Icon name="help" size={10} /><Icon name="tag" size={10} /></StatusIcons>
        </StatusRight>
      </StatusBar>

      <Taskbar>
        <Apps names={['windows', 'cortana', 'cc']} />
        <AppWindow><Icon name="explorer" />Bandicam</AppWindow>
        <Apps names={['edge', 'paint', 'store', 'solidworks']} />
        <AppWindow><Icon name="sticky" />Sticky Notes</AppWindow>
        <Apps names={['excel', 'firefox', 'word', 'ccleaner', 'snip']} />
        <AppWindow $active><Icon name="solidworks" size={14} />Edition d'éducation...</AppWindow>
        <Tray>
          <TrayButton aria-label="Icônes cachées"><Icon name="chevronUp" size={10} /></TrayButton>
          <TrayButton aria-label="Réseau"><Icon name="network" size={12} /></TrayButton>
          <TrayButton aria-label="Volume"><Icon name="sound" size={11} /></TrayButton>
          <Language>FRA</Language>
          <Clock>15:48<br />06/12/2016</Clock>
          <Notify aria-label="Notifications"><Icon name="notify" size={12} /></Notify>
        </Tray>
      </Taskbar>

      <Watermark>www.Bandicam.com</Watermark>
    </Page>
  );
}
